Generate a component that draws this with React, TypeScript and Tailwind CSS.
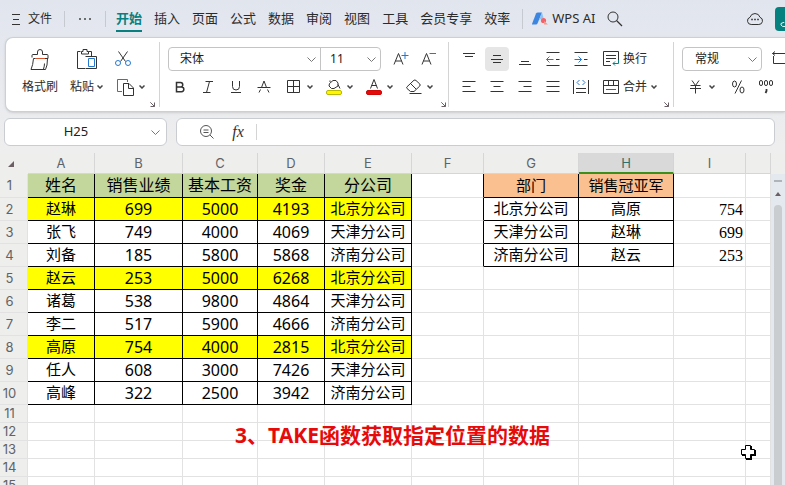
import type { ReactNode } from "react";

const ui = "font-['Noto_Sans','Noto_Sans_CJK_SC',sans-serif]";

const menuTabs = ["插入", "页面", "公式", "数据", "审阅", "视图", "工具", "会员专享", "效率"];

const staff = [
  ["赵琳", "699", "5000", "4193", "北京分公司"],
  ["张飞", "749", "4000", "4069", "天津分公司"],
  ["刘备", "185", "5800", "5868", "济南分公司"],
  ["赵云", "253", "5000", "6268", "北京分公司"],
  ["诸葛", "538", "9800", "4864", "天津分公司"],
  ["李二", "517", "5900", "4666", "济南分公司"],
  ["高原", "754", "4000", "2815", "北京分公司"],
  ["任人", "608", "3000", "7426", "天津分公司"],
  ["高峰", "322", "2500", "3942", "济南分公司"],
];
const staffHead = ["姓名", "销售业绩", "基本工资", "奖金", "分公司"];
const winners = [
  ["北京分公司", "高原", "754"],
  ["天津分公司", "赵琳", "699"],
  ["济南分公司", "赵云", "253"],
];
const columns = ["A", "B", "C", "D", "E", "F", "G", "H", "I", ""];

function Icon({ children, className = "size-4", box = "0 0 16 16" }: { children: ReactNode; className?: string; box?: string }) {
  return (
    <svg viewBox={box} className={`shrink-0 ${className}`} fill="none" stroke="#333" strokeWidth="1" aria-hidden="true">
      {children}
    </svg>
  );
}

function Caret() {
  return (
    <Icon className="h-1 w-1.5" box="0 0 6 4">
      <path d="M0.5 0.5 3 3 5.5 0.5" stroke="#444" strokeWidth="1.5" />
    </Icon>
  );
}

function Chevron() {
  return (
    <Icon className="pointer-events-none h-[5px] w-[9px]" box="0 0 9 5">
      <path d="M0.5 0.5 4.5 4.5 8.5 0.5" stroke="#777" />
    </Icon>
  );
}

function Expand() {
  return (
    <button aria-label="更多设置" className="self-end pb-1">
      <Icon className="size-[5px]" box="0 0 5 5">
        <path d="M0.3 0.3 4.5 4.5M4.5 0.5V4.5H0.5" stroke="#6b5f66" />
      </Icon>
    </button>
  );
}

function Divider() {
  return <div className="my-1 w-px shrink-0 bg-[#d4d4d4]" />;
}

function Tool({ label, children, menu = false, active = false, wide = false }: { label: string; children: ReactNode; menu?: boolean; active?: boolean; wide?: boolean }) {
  return (
    <button
      aria-label={label}
      className={`flex h-6 shrink-0 items-center ${menu ? "w-10 gap-[5px] px-1.5" : wide ? "w-7 justify-center" : "w-6 justify-center"} ${active ? "rounded bg-[#e6e6e6]" : ""}`}
    >
      {children}
      {menu && <Caret />}
    </button>
  );
}

function Picker({ label, value, className }: { label: string; value: string; className: string }) {
  return (
    <div className={`flex h-6 items-center pr-1 ${className}`}>
      <select aria-label={label} className="h-full min-w-0 flex-1 appearance-none bg-transparent text-xs text-[#222] outline-none">
        <option>{value}</option>
      </select>
      <Chevron />
    </div>
  );
}

function MenuBar() {
  return (
    <nav className="flex h-[37px] shrink-0 items-center overflow-hidden pl-3 text-[13px] whitespace-nowrap text-[#2b2b2b]">
      <button className="flex items-center gap-2 text-xs">
        <Icon className="h-3 w-2" box="0 0 8 12">
          <path d="M0 1.5H8M1 6.5H7M0 11.5H8" />
        </Icon>
        文件
      </button>
      <div className="ml-3 h-4 w-px bg-[#c6c9cf]" />
      <button aria-label="更多" className="mx-[13px]">
        <Icon className="h-1 w-[14px]" box="0 0 14 4">
          <g fill="#444" stroke="none">
            <circle cx="2" cy="2" r="1" />
            <circle cx="7" cy="2" r="1" />
            <circle cx="12" cy="2" r="1" />
          </g>
        </Icon>
      </button>
      <div className="h-4 w-px bg-[#c6c9cf]" />
      <div className="ml-2.5 flex items-center gap-3">
        <button className="mt-1 border-b-2 border-[#078180] pb-0.5 font-bold text-[#078180]">开始</button>
        {menuTabs.map((t) => (
          <button key={t}>{t}</button>
        ))}
      </div>
      <div className="ml-3 h-5 w-px bg-[#c6c9cf]" />
      <button className="ml-[9px] flex items-center gap-1">
        <Icon box="0 0 16 14" className="h-[14px] w-4">
          <path d="M0 12 4 1.5Q4.500 .5 6 .5H10L5.500 11.500Q5 12.500 4 12.500H0Z" fill="#3c86e2" stroke="none" />
          <path d="M10 .5 7 8 11.500 6Z" fill="#8ec3f5" stroke="none" />
          <circle cx="11.500" cy="8.500" r="2.600" fill="#f4616a" stroke="none" />
          <path d="M12 9 16 12.500H12Z" fill="#f79a8c" stroke="none" />
        </Icon>
        WPS AI
      </button>
      <button aria-label="搜索" className="ml-3">
        <Icon>
          <circle cx="6" cy="6" r="5" />
          <path d="M9.500 9.500 15 15" strokeWidth="1.300" />
        </Icon>
      </button>
      <button aria-label="云同步" className="ml-auto">
        <Icon box="0 0 16 14" className="h-[14px] w-4">
          <path d="M4.200 12.500H11.800A3.700 3.700 0 0 0 13 5.300 5.200 5.200 0 0 0 3 5.300 3.700 3.700 0 0 0 4.200 12.500Z" />
          <path d="M4.200 7.500H5.800M7.200 7.500H8.800M10.200 7.500H11.800" strokeWidth="1.600" />
        </Icon>
      </button>
      <button aria-label="分享" className="ml-3 flex h-6 w-2.5 items-end justify-end rounded-l bg-[#078180] pb-1">
        <Icon className="size-[5px]" box="0 0 5 5">
          <path d="M4.500 0 1 1.500V3Q2 5 5 4.500" stroke="#dff" />
        </Icon>
      </button>
    </nav>
  );
}

function Ribbon() {
  return (
    <div className="ml-[5px] flex h-[75px] shrink-0 overflow-hidden rounded-l-lg border border-r-0 border-[#cbd0d4] bg-white text-xs whitespace-nowrap text-[#2b2b2b] shadow-sm">
      <div className="flex shrink-0 pt-[9px] pl-4">
        <button className="flex h-[52px] flex-col items-center gap-1">
          <span className="flex h-6 items-center">
            <Icon className="h-[21px] w-5" box="0 0 20 21">
              <path d="M2 8.500V6.500Q2 5.500 3 5.500H7.500V3Q7.500 .5 10 .5T12.500 3V5.500H17Q18 5.500 18 6.500V9.500H3.500Q3 16 1 20.500H15.500Q17.500 17 17.500 9.500M13.500 20Q14.500 17 14.500 14.500" />
              <path d="M5 9.500H15" stroke="#d9532c" />
            </Icon>
          </span>
          <span className="h-6 leading-6">格式刷</span>
        </button>
        <button className="ml-3 flex h-[52px] flex-col items-center gap-1">
          <span className="flex h-6 items-center">
            <Icon className="h-[21px] w-[21px]" box="0 0 21 21">
              <path d="M4.500 2.500H1.500V19.500H9M12.500 2.500H15.500V7M5.500 5V2.500H7V.5H11V2.500H12.500V5Z" />
              <path d="M9.500 7.500H20.500V19.500H9.500" />
              <path d="M12.500 9.500H18.500V17.500H12.500Z" stroke="#2478d4" />
            </Icon>
          </span>
          <span className="flex h-6 items-center gap-[3px]">
            粘贴
            <Caret />
          </span>
        </button>
        <div className="ml-3 flex w-[35px] flex-col gap-1">
          <button aria-label="剪切" className="flex h-6 items-center">
            <Icon>
              <path d="M3.500 .5 10.500 10.500M12.500 .5 5.500 10.500" />
              <circle cx="3" cy="12" r="2.500" stroke="#2478d4" />
              <circle cx="13" cy="12" r="2.500" stroke="#2478d4" />
            </Icon>
          </button>
          <button aria-label="复制" className="flex h-6 items-center gap-[5px] pl-0.5">
            <Icon className="size-[17px]" box="0 0 17 17">
              <path d="M5 12.500H.5V.5H10.500V3" stroke="#2478d4" />
              <path d="M6.500 4.500H12L16.500 9V16.500H6.500ZM11.500 4.500V9.500H16.500" />
            </Icon>
            <Caret />
          </button>
        </div>
        <Expand />
        <div className="w-1" />
      </div>
      <Divider />

      <div className="flex shrink-0 pt-[9px] pl-1.5">
        <div className="flex flex-col gap-1">
          <div className="ml-0.5 flex">
            <div className="flex w-[213px] items-stretch rounded border border-[#c4c4c4]">
              <div className="-my-px w-[152px] border-r border-[#c4c4c4]">
                <Picker label="字体" value="宋体" className="pl-[11px]" />
              </div>
              <div className="-my-px flex-1">
                <Picker label="字号" value="11" className="pl-[9px]" />
              </div>
            </div>
            <div className="ml-2 flex gap-1">
              <Tool label="增大字号">
                <Icon>
                  <path d="M1 13.500 5.500 2.500 10 13.500M2.500 10H8.500" />
                  <path d="M8.500 4.500H15.500M12 1V8" stroke="#2478d4" />
                </Icon>
              </Tool>
              <Tool label="减小字号">
                <Icon>
                  <path d="M1 13.500 5.500 2.500 10 13.500M2.500 10H8.500" />
                  <path d="M8.500 2.500H15" stroke="#2478d4" />
                </Icon>
              </Tool>
            </div>
          </div>
          <div className="flex">
            <Tool label="加粗" wide>
              <Icon>
                <path d="M4.500 3.500H8.500A2.200 2.200 0 0 1 8.500 8H4.500ZM4.500 8H9.500A2.300 2.300 0 0 1 9.500 12.700H4.500Z" strokeWidth="1.500" />
              </Icon>
            </Tool>
            <Tool label="倾斜" wide>
              <Icon>
                <path d="M5.500 2.500H13M3 13.500H10.500M9.500 2.500 6.500 13.500" />
              </Icon>
            </Tool>
            <Tool label="下划线" wide>
              <Icon>
                <path d="M4.500 2V7.500A3.500 3.500 0 0 0 11.500 7.500V2M3 13.500H13" />
              </Icon>
            </Tool>
            <Tool label="删除线" wide>
              <Icon>
                <path d="M1.500 8.500H14.500M5.500 8.500 8 2 10.500 8.500M4.500 10.500 3 13.500M11.500 10.500 13 13.500" />
              </Icon>
            </Tool>
            <div className="ml-0.5 flex">
              <Tool label="边框" menu>
                <Icon>
                  <path d="M1.500 1.500H13.500V13.500H1.500ZM7.500 1.500V13.500M1.500 7.500H13.500" />
                </Icon>
              </Tool>
              <Tool label="填充颜色" menu>
                <Icon>
                  <path d="M3.500 4.500 7 1.500H10L12 4V7L8 9.500H5.500L3 7ZM4 3V1.500M12 5.500 14 9.500" />
                  <rect x=".5" y="11.500" width="15" height="4" rx="1.500" fill="#fff500" stroke="#b8b800" />
                </Icon>
              </Tool>
              <Tool label="字体颜色" menu>
                <Icon>
                  <path d="M4.500 9.500 8 .5 11.500 9.500M5.500 6.500H10.500" />
                  <rect x=".5" y="11.500" width="15" height="4" rx="1.500" fill="#e60b0b" stroke="#cf0808" />
                </Icon>
              </Tool>
              <Tool label="清除" menu>
                <Icon>
                  <path d="M.8 8 8 1.200Q9 .7 10 1.500L13.800 5Q14.500 6 13.800 7L8 12.500H4.500L1 9.500Q.4 8.800.8 8ZM4.500 4.500 10 10M3.500 14.500H15.500" />
                </Icon>
              </Tool>
            </div>
          </div>
        </div>
        <Expand />
        <div className="w-0.5" />
      </div>
      <Divider />

      <div className="flex shrink-0 pt-[9px] pl-2">
        <div className="flex w-[207px] flex-col gap-1">
          <div className="flex gap-1">
            <Tool label="顶端对齐">
              <Icon><path d="M2 2.500H14M4 5.500H12" /></Icon>
            </Tool>
            <Tool label="垂直居中" active>
              <Icon><path d="M4 4.500H12M2 8.500H14M4 11.500H12" /></Icon>
            </Tool>
            <Tool label="底端对齐">
              <Icon><path d="M4 10.500H12M2 13.500H14" /></Icon>
            </Tool>
            <Tool label="减少缩进">
              <Icon>
                <path d="M1.500 1.500H14.500M1.500 14.500H14.500M11 8.500H14.500" />
                <path d="M8.500 8.500H1.500M4.500 5.500 1.500 8.500 4.500 11.500" stroke="#2478d4" />
              </Icon>
            </Tool>
            <Tool label="增加缩进">
              <Icon>
                <path d="M1.500 1.500H14.500M1.500 14.500H14.500M11 8.500H14.500" />
                <path d="M1.500 8.500H8.500M5.500 5.500 8.500 8.500 5.500 11.500" stroke="#2478d4" />
              </Icon>
            </Tool>
            <button className="ml-1.5 flex h-6 items-center gap-1">
              <Icon>
                <path d="M8 14.500H.5V.5H15.500V10M3 4.500H13M3 7.500H13M3 10.500H7" />
                <path d="M15.500 9V12.500H10M12 10.500 10 12.500 12 14.500" stroke="#078180" />
              </Icon>
              换行
            </button>
          </div>
          <div className="flex gap-1">
            <Tool label="左对齐">
              <Icon><path d="M1.500 2.500H14.500M1.500 7.500H9.500M1.500 12.500H14.500" /></Icon>
            </Tool>
            <Tool label="居中">
              <Icon><path d="M1.500 2.500H14.500M4.500 7.500H11.500M1.500 12.500H14.500" /></Icon>
            </Tool>
            <Tool label="右对齐">
              <Icon><path d="M1.500 2.500H14.500M6.500 7.500H14.500M1.500 12.500H14.500" /></Icon>
            </Tool>
            <Tool label="两端对齐">
              <Icon><path d="M1.500 2.500H14.500M1.500 7.500H14.500M1.500 12.500H14.500" /></Icon>
            </Tool>
            <Tool label="分散对齐">
              <Icon>
                <path d="M.5 1V15M15.500 1V15M3 9.500H13M3 13.500H13" />
                <path d="M6.500 1 4 3.500 6.500 6M9.500 1 12 3.500 9.500 6" stroke="#2478d4" />
              </Icon>
            </Tool>
            <button className="ml-1.5 flex h-6 items-center gap-1">
              <Icon>
                <path d="M.5 1.500H15.500V14.500H.5ZM.5 6.500H15.500M5.500 1.500V6.500M10.500 1.500V6.500" />
                <path d="M3 10.500H13" stroke="#078180" />
              </Icon>
              合并
              <Caret />
            </button>
          </div>
        </div>
        <Expand />
        <div className="w-1" />
      </div>
      <Divider />

      <div className="flex min-w-0 flex-col gap-1 pt-[9px] pl-2">
        <div className="flex">
          <Picker label="数字格式" value="常规" className="w-20 shrink-0 rounded border border-[#c4c4c4] pl-3" />
          <button aria-label="转换" className="ml-2.5 flex h-6 shrink-0 items-center">
            <Icon>
              <path d="M3 .5 .5 2.500 3 4.500M.5 2.500H16M1.500 5V12.500H16" />
            </Icon>
          </button>
        </div>
        <div className="flex">
          <Tool label="货币" menu>
            <Icon>
              <path d="M4 1.500 7.500 6.500 11 1.500M2.500 6.500H12.500M2 9.500H13M7.500 6.500V14.500" />
            </Icon>
          </Tool>
          <div className="ml-0.5 flex">
            <Tool label="百分比" wide>
              <Icon>
                <ellipse cx="4.500" cy="5" rx="2" ry="3" />
                <ellipse cx="12" cy="11" rx="2" ry="3" />
                <path d="M11.500 1.500 5 14.500" />
              </Icon>
            </Tool>
            <Tool label="千位分隔" wide>
              <Icon>
                <rect x="1.500" y="1.500" width="3" height="5" rx="1.500" />
                <rect x="6.500" y="1.500" width="3" height="5" rx="1.500" />
                <rect x="11.500" y="1.500" width="3" height="5" rx="1.500" />
                <path d="M8.500 10V12L7.500 14" strokeWidth="1.800" />
              </Icon>
            </Tool>
          </div>
        </div>
      </div>
    </div>
  );
}

function FormulaBar() {
  return (
    <div className="mt-1.5 flex h-7 shrink-0 gap-[9px] pr-2.5 pl-1">
      <div className="flex w-[163px] items-center rounded-md border border-[#c9cdd2] bg-white pr-1.5">
        <input aria-label="名称框" defaultValue="H25" className="min-w-0 flex-1 bg-transparent pr-4 pl-3 text-center text-[13px] text-[#222] outline-none" />
        <Chevron />
      </div>
      <div className="flex min-w-0 flex-1 items-center rounded-md border border-[#c9cdd2] bg-white pl-[22px]">
        <button aria-label="缩小">
          <Icon>
            <circle cx="7" cy="7" r="5.500" stroke="#555" />
            <path d="M4.500 6H9.500M4.500 8.500H9.500M11 11 14.500 14.500" stroke="#555" />
          </Icon>
        </button>
        <button className="ml-[15px] w-4 font-['Liberation_Serif',serif] text-base leading-4 text-[#333] italic">fx</button>
        <div className="ml-2.5 h-4 w-px bg-[#d4d4d4]" />
        <input aria-label="编辑栏" className="ml-2 min-w-0 flex-1 bg-transparent text-[13px] outline-none" />
      </div>
    </div>
  );
}

function Cell({ row, col }: { row: number; col: number }) {
  const inStaff = row <= 10 && col < 5;
  const inWinners = row <= 4 && (col === 6 || col === 7);
  const number = inStaff && row > 1 && col > 0 && col < 4;
  let text = "";
  let look = "bg-white p-0 text-[15px]";
  if (number) {
    text = staff[row - 2][col];
    look = "p-0 text-base";
  } else if (inStaff) {
    text = row === 1 ? staffHead[col] : staff[row - 2][col];
    look = row === 1 ? "bg-[#c3d69b] p-0 pb-0.5 text-base" : "p-0 pb-0.5 text-[15px]";
  } else if (inWinners) {
    text = row === 1 ? ["部门", "销售冠亚军"][col - 6] : winners[row - 2][col - 6];
    look = row === 1 ? "bg-[#fac090] p-0 pb-0.5 text-[15px]" : "bg-white p-0 pb-0.5 text-[15px]";
  } else if (col === 8 && row > 1 && row <= 4) {
    text = winners[row - 2][2];
    look = "bg-white p-0 pt-0.5 pr-0.5 font-['Liberation_Serif',serif] text-base";
  }
  const fill = inStaff && row > 1 ? ([2, 5, 8].includes(row) ? "bg-[#ffff00]" : "bg-white") : "";
  const align = col === 8 ? "text-right" : "text-center";
  const black = inStaff || inWinners;
  const right = black || (col === 5 && row <= 4) ? "border-r-black" : "border-r-[#e2e2e2]";
  const bottom = black ? "border-b-black" : "border-b-[#e2e2e2]";
  return <td className={`border-r border-b leading-4 ${align} ${right} ${bottom} ${fill} ${look}`}>{text}</td>;
}

function Sheet() {
  return (
    <div className="mt-[7px] flex min-h-0 flex-1 overflow-hidden bg-[#eeeeec]">
      <table className="h-fit min-w-0 flex-1 table-fixed border-separate border-spacing-0 whitespace-nowrap text-black">
        <colgroup>
          <col className="w-[28px]" />
          <col className="w-[67px]" />
          <col className="w-[88px]" />
          <col className="w-[75px]" />
          <col className="w-[67px]" />
          <col className="w-[87px]" />
          <col className="w-[72px]" />
          <col className="w-[95px]" />
          <col className="w-[95px]" />
          <col className="w-[72px]" />
          <col />
        </colgroup>
        <thead>
          <tr className="h-[21px] text-[13px] leading-4 text-[#5f6368]">
            <th className="p-0 align-middle">
              <Icon className="ml-2 size-1.5" box="0 0 6 6">
                <path d="M6 0V6H0Z" fill="#6b5f66" stroke="none" />
              </Icon>
            </th>
            {columns.map((c, i) => (
              <th
                key={i}
                scope="col"
                className={`border-r p-0 font-['Inter',sans-serif] font-normal ${c === "H" ? "border-b-2 border-r-[#d4d4d4] border-b-[#3d8f1d] bg-[#d9d9d9] text-[#2f6f6f]" : "border-b border-[#d6d6d6]"}`}
              >
                {c}
              </th>
            ))}
          </tr>
        </thead>
        <tbody>
          {Array.from({ length: 15 }, (_, i) => i + 1).map((row) => (
            <tr key={row} className={row === 1 ? "h-6" : row <= 10 ? "h-[23px]" : "h-[18px]"}>
              <th scope="row" className="border-r border-b border-[#e2e2e2] bg-[#eeeeec] p-0 pr-2 pb-px font-['Inter',sans-serif] text-[13px] leading-4 font-normal text-[#5f6368]">
                {row}
              </th>
              {columns.map((_, col) => (
                <Cell key={col} row={row} col={col} />
              ))}
            </tr>
          ))}
        </tbody>
      </table>
      <div className="mt-[21px] flex w-[14px] shrink-0 flex-col items-center bg-[#e4e9ef]">
        <div className="mt-1.5 h-0.5 w-2 bg-[#b0b4b8]" />
        <Icon className="mt-2.5 h-1 w-1.5" box="0 0 6 4">
          <path d="M3 0 6 4H0Z" fill="#6b5f66" stroke="none" />
        </Icon>
        <div className="mt-[9px] w-2 flex-1 rounded-t bg-[#c9cdd0]" />
      </div>
    </div>
  );
}

export default function App() {
  return (
    <div className={`relative flex h-screen flex-col overflow-hidden bg-linear-to-b from-[#e1e5ee] from-0% to-[#eeeeee] to-30% ${ui}`}>
      <MenuBar />
      <Ribbon />
      <FormulaBar />
      <Sheet />
      <p className="pointer-events-none absolute inset-x-0 bottom-9 text-center text-[21px] leading-7 font-bold text-[#e60b0b]">3、TAKE函数获取指定位置的数据</p>
      <svg viewBox="0 0 15 15" className="pointer-events-none absolute right-[29px] bottom-[25px] size-[15px]" aria-hidden="true">
        <path d="M5 1H11V5H15V11H11V15H5V11H1V5H5Z" fill="#000" />
        <path d="M4.500 .5H9.500V4.500H13.500V9.500H9.500V13.500H4.500V9.500H.5V4.500H4.500Z" fill="#fff" stroke="#000" />
      </svg>
    </div>
  );
}
